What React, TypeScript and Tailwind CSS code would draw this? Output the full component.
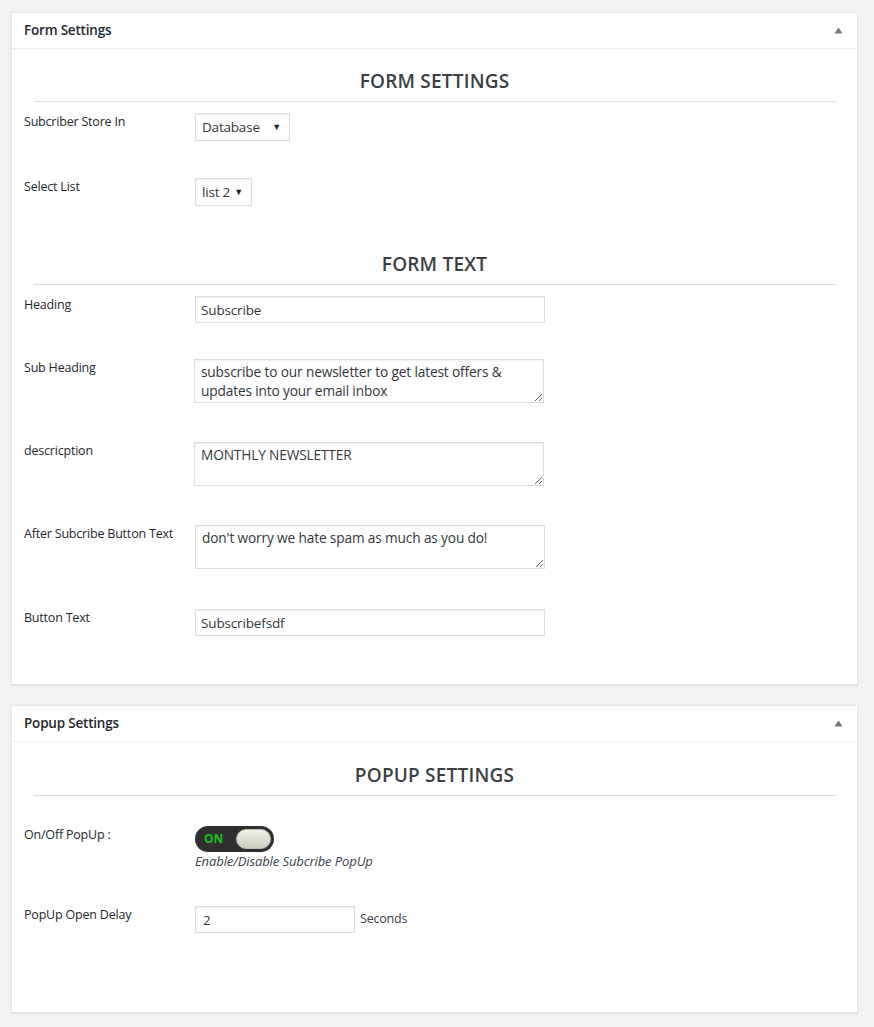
import React from 'react';

const font = { fontFamily: '"Open Sans", "Noto Sans", "Liberation Sans", sans-serif' };

function Arrow() {
  return (
    <svg width="9" height="7" viewBox="0 0 9 7" className="text-[#72777c]">
      <path d="M4.5 0.5 L8.5 6.5 L0.5 6.5 Z" fill="currentColor" />
    </svg>
  );
}

function Panel({ title, children }: { title: string; children: React.ReactNode }) {
  return (
    <div className="bg-white border border-[#e5e5e5] shadow-[0_1px_1px_rgba(0,0,0,0.06)]">
      <div className="h-[36px] flex items-center justify-between pl-[12px] pr-[14px] border-b border-[#eeeeee]">
        <h2 className="text-[13.5px] font-semibold text-[#23282d] leading-none tracking-[-0.2px]">{title}</h2>
        <Arrow />
      </div>
      <div className="px-[12px]">{children}</div>
    </div>
  );
}

function SectionTitle({ text }: { text: string }) {
  return (
    <div className="mx-[10px] border-b border-[#dcdcdc] pb-[6px]">
      <div className="text-center text-[19px] font-semibold text-[#3a3f44] leading-[28px] tracking-[0.2px]">
        {text}
      </div>
    </div>
  );
}

function Row({ label, h, children }: { label: string; h: string; children: React.ReactNode }) {
  return (
    <div className={`flex ${h}`}>
      <div className="w-[171px] text-[12.5px] text-[#23282d] leading-[17px] tracking-[-0.2px]">{label}</div>
      <div>{children}</div>
    </div>
  );
}

function FakeSelect({ value, w }: { value: string; w: string }) {
  return (
    <div
      className={`${w} h-[28px] border border-[#dddddd] shadow-[inset_0_1px_2px_rgba(0,0,0,0.07)] flex items-center justify-between pl-[6px] pr-[8px] text-[13.5px] text-[#32373c] tracking-[-0.2px]`}
    >
      <span>{value}</span>
      <span className="text-[9px] text-[#222]">▼</span>
    </div>
  );
}

const inputCls =
  'block w-[350px] h-[27px] border border-[#dddddd] shadow-[inset_0_1px_2px_rgba(0,0,0,0.07)] px-[5px] text-[13.5px] text-[#32373c] outline-none tracking-[-0.15px]';
const areaCls =
  'block w-[350px] h-[44px] border border-[#dddddd] shadow-[inset_0_1px_2px_rgba(0,0,0,0.07)] px-[6px] pt-[2px] text-[13.7px] leading-[19px] text-[#32373c] outline-none tracking-[-0.15px]';

export default function App() {
  return (
    <div style={font} className="min-h-[1027px] bg-[#f1f1f1] pt-[12px] pl-[11px] pr-[16px]">
      <Panel title="Form Settings">
        <div className="pt-[18px]">
          <SectionTitle text="FORM SETTINGS" />
        </div>
        <div className="pt-[11px]">
          <Row label="Subcriber Store In" h="h-[65px]">
            <FakeSelect value="Database" w="w-[95px]" />
          </Row>
          <Row label="Select List" h="h-[72px]">
            <FakeSelect value="list 2" w="w-[57px]" />
          </Row>
        </div>
        <SectionTitle text="FORM TEXT" />
        <div className="pt-[11px]">
          <Row label="Heading" h="h-[63px]">
            <input className={inputCls} defaultValue="Subscribe" readOnly />
          </Row>
          <Row label="Sub Heading" h="h-[83px]">
            <textarea
              className={areaCls + ' -ml-[1px]'}
              defaultValue="subscribe to our newsletter to get latest offers & updates into your email inbox"
              readOnly
            />
          </Row>
          <Row label="descricption" h="h-[83px]">
            <textarea className={areaCls + ' -ml-[1px]'} defaultValue="MONTHLY NEWSLETTER" readOnly />
          </Row>
          <Row label="After Subcribe Button Text" h="h-[84px]">
            <textarea
              className={areaCls}
              defaultValue="don't worry we hate spam as much as you do!"
              readOnly
            />
          </Row>
          <Row label="Button Text" h="h-[75px]">
            <input className={inputCls} defaultValue="Subscribefsdf" readOnly />
          </Row>
        </div>
      </Panel>

      <div className="h-[20px]" />

      <Panel title="Popup Settings">
        <div className="pt-[19px]">
          <SectionTitle text="POPUP SETTINGS" />
        </div>
        <div className="pt-[30px]">
          <Row label="On/Off PopUp :" h="h-[80px]">
            <div className="w-[79px] h-[26px] rounded-full bg-[#2f2f2f] flex items-center justify-between pl-[9px] pr-[3px]">
              <span className="text-[12px] font-bold text-[#1ec21e] leading-none">ON</span>
              <span className="w-[35px] h-[20px] rounded-full bg-gradient-to-b from-[#f0f1ea] to-[#c9cdbc] border border-[#b9bdae]" />
            </div>
            <div className="text-[13px] italic text-[#3c434a] leading-[17px] pt-[1px] tracking-[-0.1px]">
              Enable/Disable Subcribe PopUp
            </div>
          </Row>
          <Row label="PopUp Open Delay" h="h-[106px]">
            <div className="flex items-center gap-[5px]">
              <input
                className="block w-[160px] h-[27px] border border-[#dddddd] shadow-[inset_0_1px_2px_rgba(0,0,0,0.07)] px-[7px] text-[13.5px] text-[#32373c] outline-none"
                defaultValue="2"
                readOnly
              />
              <span className="text-[12.5px] text-[#3c434a] tracking-[-0.2px]">Seconds</span>
            </div>
          </Row>
        </div>
      </Panel>
      <div className="h-[16px]" />
    </div>
  );
}
